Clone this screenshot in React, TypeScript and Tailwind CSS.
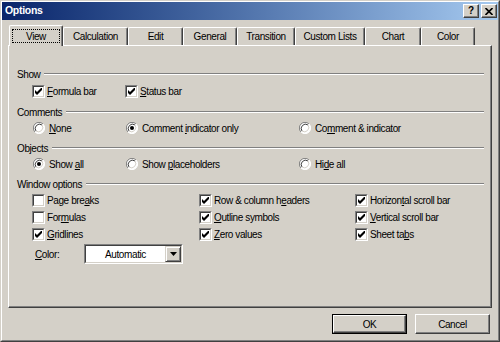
import React from 'react'

const ui = "font-['Liberation_Sans',Arial,sans-serif] text-[10px] tracking-[-0.4px] text-black"

function U({ t, i }: { t: string; i: number }) {
  return (
    <span className="whitespace-nowrap">
      {t.slice(0, i)}
      <span className="underline underline-offset-[1px]">{t[i]}</span>
      {t.slice(i + 1)}
    </span>
  )
}

function Check({ on }: { on?: boolean }) {
  return (
    <span className="block w-[13px] h-[13px] shrink-0 border border-t-[#808080] border-l-[#808080] border-r-white border-b-white">
      <span className="flex w-full h-full items-center justify-center bg-white border border-t-[#404040] border-l-[#404040] border-r-[#d4d0c8] border-b-[#d4d0c8]">
        {on && (
          <svg width="7" height="7" viewBox="0 0 7 7">
            <path d="M0 2 L2 4 L7 -1 L7 2 L2 7 L0 5 Z" fill="#000" />
          </svg>
        )}
      </span>
    </span>
  )
}

function Radio({ on }: { on?: boolean }) {
  return (
    <svg width="12" height="12" viewBox="0 0 12 12" className="shrink-0">
      <circle cx="6" cy="6" r="5.5" fill="#fff" />
      <path d="M10 2 A5.5 5.5 0 0 0 2 10" stroke="#808080" fill="none" />
      <path d="M2 10 A5.5 5.5 0 0 0 10 2" stroke="#fff" fill="none" />
      <path d="M9 3 A4.3 4.3 0 0 0 3 9" stroke="#404040" fill="none" />
      <path d="M3 9 A4.3 4.3 0 0 0 9 3" stroke="#d4d0c8" fill="none" />
      {on && <circle cx="6" cy="6" r="2" fill="#000" />}
    </svg>
  )
}

function Item({ kind, on, t, i }: { kind: 'c' | 'r'; on?: boolean; t: string; i: number }) {
  return (
    <div className={kind === 'c' ? 'flex items-center gap-[1px]' : 'flex items-center gap-[3px]'}>
      {kind === 'c' ? <Check on={on} /> : <span className="pl-px"><Radio on={on} /></span>}
      <span className="pl-px">
        <U t={t} i={i} />
      </span>
    </div>
  )
}

function Group({ label }: { label: string }) {
  return (
    <div className="flex items-center h-[16px] gap-[4px]">
      <span className="whitespace-nowrap">{label}</span>
      <div className="flex-1 h-[2px] border-t border-t-[#808080] border-b border-b-white" />
    </div>
  )
}

const tabs: [string, number][] = [
  ['View', 54],
  ['Calculation', 65],
  ['Edit', 55],
  ['General', 54],
  ['Transition', 58],
  ['Custom Lists', 70],
  ['Chart', 56],
  ['Color', 54],
]

export default function App() {
  return (
    <div className={`w-[500px] h-[342px] bg-[#d4d0c8] border border-t-[#d4d0c8] border-l-[#d4d0c8] border-r-[#404040] border-b-[#404040] ${ui}`}>
      <div className="h-full border border-t-white border-l-white border-r-[#808080] border-b-[#808080] flex flex-col">
        {/* title bar */}
        <div className="h-[18px] flex items-center justify-between bg-gradient-to-r from-[#0a246a] to-[#a6caf0] pl-[3px] pr-px">
          <span className="text-white font-bold text-[10.5px] tracking-[-0.3px]">Options</span>
          <div className="flex gap-[2px]">
            <div className="w-[16px] h-[14px] flex items-center justify-center bg-[#d4d0c8] border border-t-white border-l-white border-r-[#404040] border-b-[#404040] shadow-[inset_-1px_-1px_0_#808080] font-bold text-[10px] leading-none tracking-normal">
              ?
            </div>
            <div className="w-[16px] h-[14px] flex items-center justify-center bg-[#d4d0c8] border border-t-white border-l-white border-r-[#404040] border-b-[#404040] shadow-[inset_-1px_-1px_0_#808080]">
              <svg width="8" height="7" viewBox="0 0 8 7">
                <path d="M0.5 0 L7.5 7 M7.5 0 L0.5 7" stroke="#000" strokeWidth="1.6" />
              </svg>
            </div>
          </div>
        </div>

        {/* tabs */}
        <div className="mt-[5px] ml-[7px] h-[20px] flex items-end">
          {tabs.map(([name, w], idx) =>
            idx === 0 ? (
              <div
                key={name}
                style={{ width: w }}
                className="relative z-10 -mb-px h-[21px] bg-[#d4d0c8] border-t border-l border-white border-r border-r-[#404040] rounded-t-[2px] shadow-[inset_-1px_0_0_#808080] flex items-start justify-center pt-[3px] px-[2px]"
              >
                <div className="w-full h-[14px] flex items-center justify-center border border-dotted border-black">{name}</div>
              </div>
            ) : (
              <div
                key={name}
                style={{ width: w }}
                className="h-[18px] bg-[#d4d0c8] border-t border-l border-white border-r border-r-[#404040] rounded-t-[2px] shadow-[inset_-1px_0_0_#808080] flex items-center justify-center"
              >
                {name}
              </div>
            )
          )}
        </div>

        {/* panel */}
        <div className="ml-[6px] w-[484px] h-[263px] border-t border-l border-white border-r border-b border-r-[#404040] border-b-[#404040] shadow-[inset_-1px_-1px_0_#808080] pt-[20px] pl-[8px] pr-[7px]">
          <Group label="Show" />
          <div className="h-[18px] flex items-center pl-[15px]">
            <div className="w-[93px]"><Item kind="c" on t="Formula bar" i={0} /></div>
            <Item kind="c" on t="Status bar" i={0} />
          </div>

          <div className="mt-[4px]"><Group label="Comments" /></div>
          <div className="h-[16px] flex items-center pl-[15px]">
            <div className="w-[93px]"><Item kind="r" t="None" i={0} /></div>
            <div className="w-[173px]"><Item kind="r" on t="Comment indicator only" i={8} /></div>
            <Item kind="r" t="Comment & indicator" i={2} />
          </div>

          <div className="mt-[4px]"><Group label="Objects" /></div>
          <div className="h-[16px] flex items-center pl-[15px]">
            <div className="w-[93px]"><Item kind="r" on t="Show all" i={5} /></div>
            <div className="w-[173px]"><Item kind="r" t="Show placeholders" i={5} /></div>
            <Item kind="r" t="Hide all" i={2} />
          </div>

          <div className="mt-[4px]"><Group label="Window options" /></div>
          <div className="pl-[15px]">
            <div className="h-[17px] flex items-center">
              <div className="w-[167px]"><Item kind="c" t="Page breaks" i={8} /></div>
              <div className="w-[156px]"><Item kind="c" on t="Row & column headers" i={14} /></div>
              <Item kind="c" on t="Horizontal scroll bar" i={7} />
            </div>
            <div className="h-[17px] flex items-center">
              <div className="w-[167px]"><Item kind="c" t="Formulas" i={3} /></div>
              <div className="w-[156px]"><Item kind="c" on t="Outline symbols" i={0} /></div>
              <Item kind="c" on t="Vertical scroll bar" i={0} />
            </div>
            <div className="h-[17px] flex items-center">
              <div className="w-[167px]"><Item kind="c" on t="Gridlines" i={0} /></div>
              <div className="w-[156px]"><Item kind="c" on t="Zero values" i={0} /></div>
              <Item kind="c" on t="Sheet tabs" i={8} />
            </div>
            <div className="h-[22px] flex items-center">
              <div className="w-[52px] pl-[3px]"><U t="Color:" i={0} /></div>
              <div className="w-[99px] h-[20px] flex border border-t-[#808080] border-l-[#808080] border-r-white border-b-white">
                <div className="flex-1 flex border border-t-[#404040] border-l-[#404040] border-r-[#d4d0c8] border-b-[#d4d0c8] bg-white">
                  <div className="flex-1 flex items-center justify-center">Automatic</div>
                  <div className="w-[16px] flex items-center justify-center bg-[#d4d0c8] border border-t-[#d4d0c8] border-l-[#d4d0c8] border-r-[#404040] border-b-[#404040] shadow-[inset_1px_1px_0_#fff,inset_-1px_-1px_0_#808080]">
                    <svg width="7" height="4" viewBox="0 0 7 4">
                      <path d="M0 0 H7 L3.5 4 Z" fill="#000" />
                    </svg>
                  </div>
                </div>
              </div>
            </div>
          </div>
        </div>

        {/* buttons */}
        <div className="mt-[6px] flex justify-end gap-[8px] pr-[8px]">
          <div className="w-[75px] h-[20px] border border-black">
            <div className="w-full h-full flex items-center justify-center border border-t-white border-l-white border-r-[#404040] border-b-[#404040] shadow-[inset_-1px_-1px_0_#808080]">
              OK
            </div>
          </div>
          <div className="w-[75px] h-[20px] flex items-center justify-center border border-t-white border-l-white border-r-[#404040] border-b-[#404040] shadow-[inset_-1px_-1px_0_#808080]">
            Cancel
          </div>
        </div>
      </div>
    </div>
  )
}
